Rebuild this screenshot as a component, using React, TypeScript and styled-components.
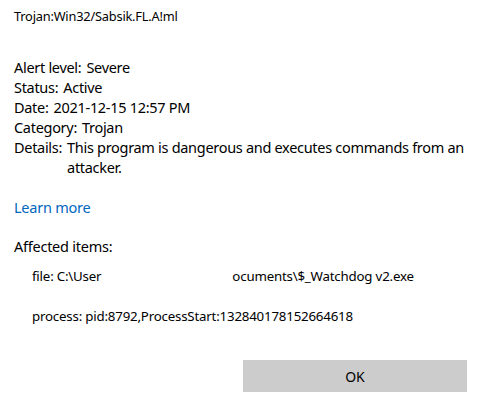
import React from 'react';
import styled, { createGlobalStyle } from 'styled-components';

const GlobalStyle = createGlobalStyle`
   html, body {
      margin: 0;
      padding: 0;
      background: #ffffff;
   }
   body {
      font-family: 'Noto Sans', 'Open Sans', sans-serif;
      color: #000000;
   }
`;

type DetailRow = {
   label: string;
   value: string;
};

const rows: DetailRow[] = [
   { label: 'Alert level:', value: 'Severe' },
   { label: 'Status:', value: 'Active' },
   { label: 'Date:', value: '2021-12-15 12:57 PM' },
   { label: 'Category:', value: 'Trojan' },
   { label: 'Details:', value: 'This program is dangerous and executes commands from an attacker.' },
];

export default function App() {
   return (
      <>
         <GlobalStyle />
         <Dialog>
            <Title>Trojan:Win32/Sabsik.FL.A!ml</Title>

            <Details>
               {rows.map((row) => (
                  <Row key={row.label}>
                     <Label>{row.label}</Label>
                     <Value>{row.value}</Value>
                  </Row>
               ))}
            </Details>

            <LearnMore href="#">Learn more</LearnMore>

            <SectionTitle>Affected items:</SectionTitle>
            <Items>
               <Item>
                  file: C:\User<Redacted />ocuments\$_Watchdog v2.exe
               </Item>
               <Item>process: pid:8792,ProcessStart:132840178152664618</Item>
            </Items>

            <Footer>
               <OkButton>OK</OkButton>
            </Footer>
         </Dialog>
      </>
   );
}

const Dialog = styled.div`
   width: 480px;
   height: 402px;
   box-sizing: border-box;
   padding: 6px 13px 0 14px;
   display: flex;
   flex-direction: column;
`;

const Title = styled.div`
   font-size: 12.8px;
   line-height: 20px;
   letter-spacing: -0.2px;
`;

const Details = styled.div`
   margin-top: 31px;
   margin-right: -10px;
   display: flex;
   flex-direction: column;
   font-size: 14.5px;
   line-height: 20px;
   letter-spacing: -0.3px;
`;

const Row = styled.div`
   display: flex;
   gap: 5px;
`;

const Label = styled.span`
   flex: none;
`;

const Value = styled.span`
   flex: 1;
`;

const LearnMore = styled.a`
   margin-top: 20px;
   font-size: 14.5px;
   line-height: 20px;
   letter-spacing: -0.25px;
   color: #0067c0;
   text-decoration: none;
   align-self: flex-start;
`;

const SectionTitle = styled.div`
   margin-top: 19px;
   font-size: 14.5px;
   line-height: 20px;
   letter-spacing: -0.25px;
`;

const Items = styled.div`
   margin-top: 10px;
   padding-left: 18px;
   display: flex;
   flex-direction: column;
   gap: 20px;
`;

const Item = styled.div`
   font-size: 13.3px;
   line-height: 20px;
   letter-spacing: -0.2px;
`;

const Redacted = styled.span`
   display: inline-block;
   width: 131px;
`;

const Footer = styled.div`
   margin-top: auto;
   margin-bottom: 10px;
   display: flex;
   justify-content: flex-end;
`;

const OkButton = styled.button`
   width: 224px;
   height: 32px;
   border: none;
   background: #cccccc;
   font-family: 'Noto Sans', 'Open Sans', sans-serif;
   font-size: 14px;
   color: #000000;
   padding: 0;
`;
